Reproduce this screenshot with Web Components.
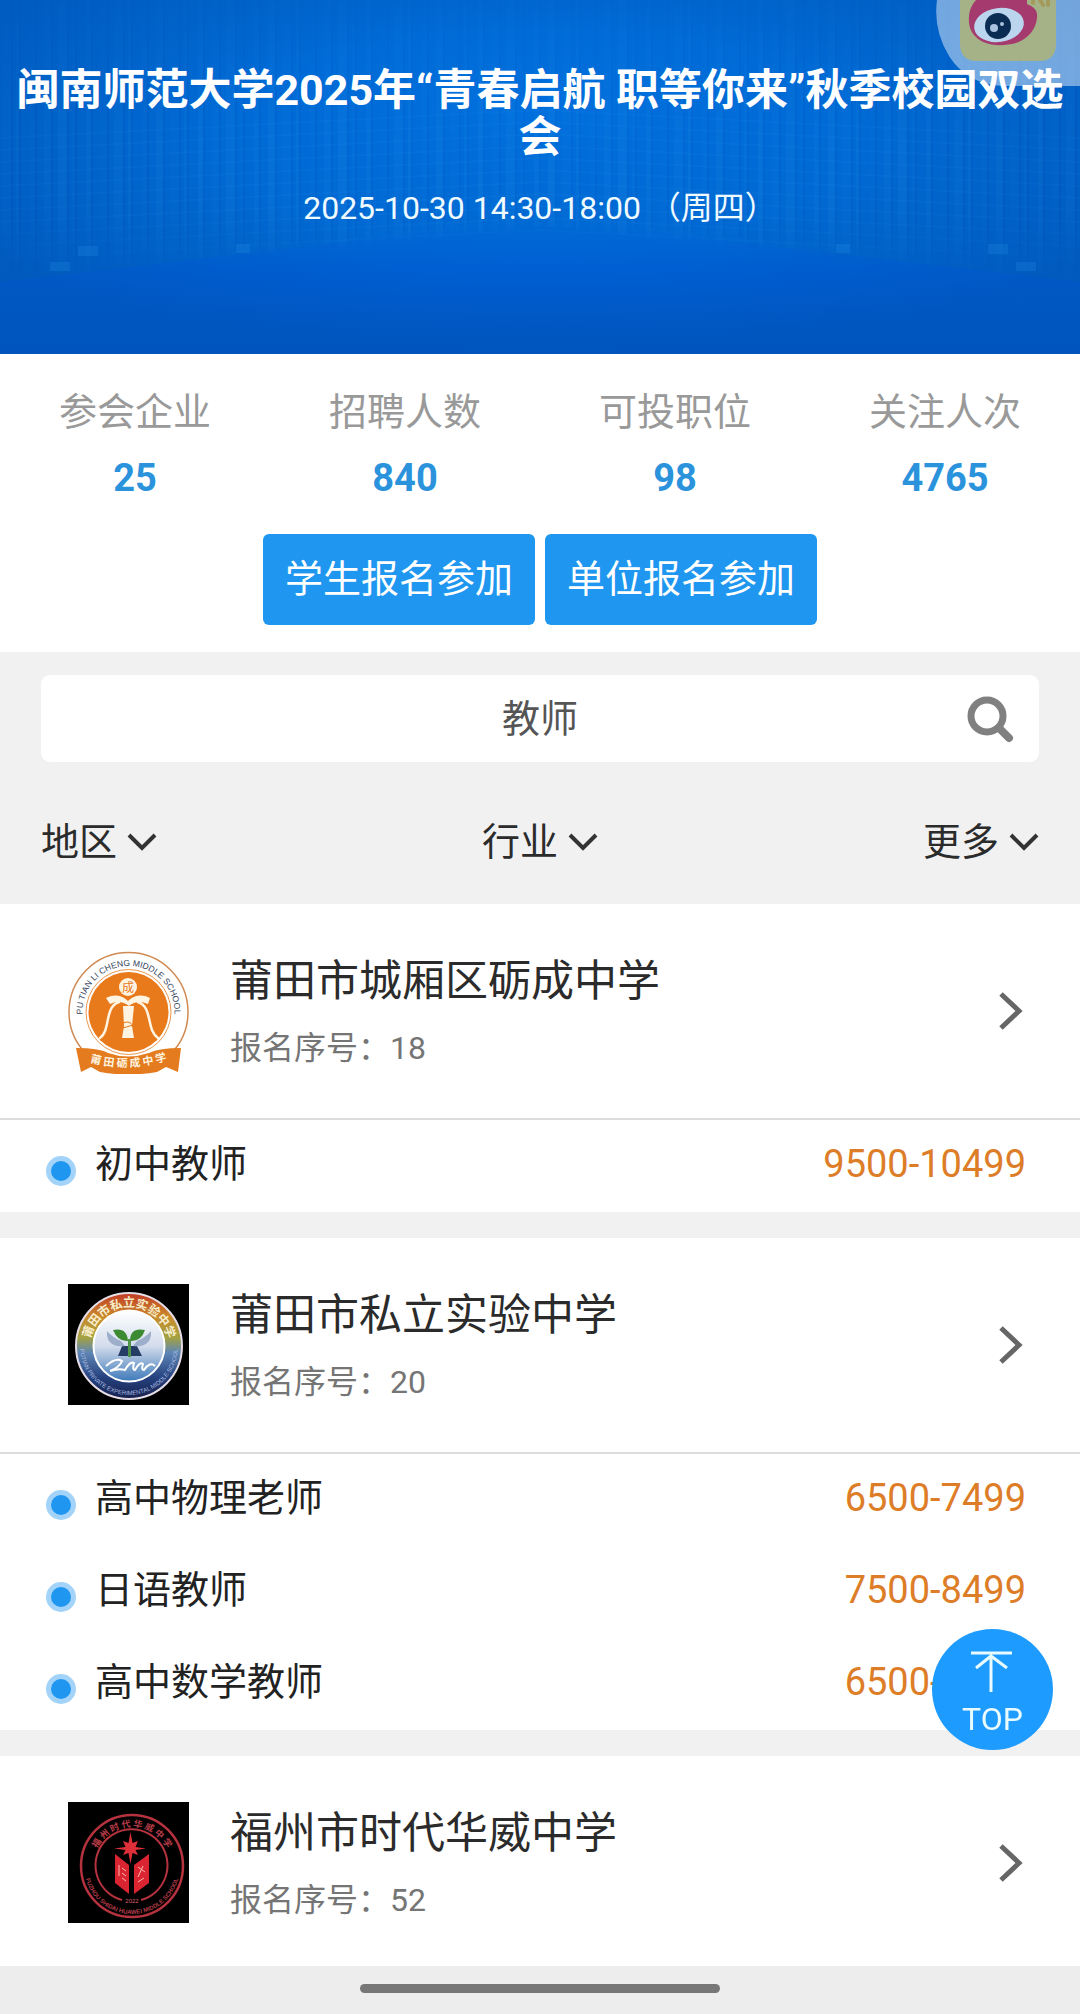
<!DOCTYPE html>
<html lang="zh-CN">
<head>
<meta charset="UTF-8">
<meta name="viewport" content="width=device-width, initial-scale=1">
<title>闽南师范大学2025年秋季校园双选会</title>
<style>
    :root {
        --blue: #1f97f0;
        --grey: #f1f1f1;
        --line: #dcdcdc;
        --text: #2b2b2b;
        --muted: #757575;
        --salary: #dd7d27;
        --fs-title: 43px;
        --fs-body: 38px;
        --fs-small: 32px;
    }
    body {
        margin: 0;
        background: #fff;
        color: var(--text);
        font-family: Roboto, "Noto Sans CJK SC", sans-serif;
        font-size: var(--fs-body);
    }
</style>
</head>
<body>

<fair-page>
    <fair-banner when="2025-10-30 14:30-18:00 （周四）">闽南师范大学2025年“青春启航 职等你来”秋季校园双选会</fair-banner>

    <fair-summary>
        <fair-stat label="参会企业">25</fair-stat>
        <fair-stat label="招聘人数">840</fair-stat>
        <fair-stat label="可投职位">98</fair-stat>
        <fair-stat label="关注人次">4765</fair-stat>
        <action-button slot="actions">学生报名参加</action-button>
        <action-button slot="actions">单位报名参加</action-button>
    </fair-summary>

    <search-panel value="教师">
        <filter-select label="地区"></filter-select>
        <filter-select label="行业"></filter-select>
        <filter-select label="更多"></filter-select>
    </search-panel>

    <company-card name="莆田市城厢区砺成中学" number="18">
        <logo-licheng slot="logo"></logo-licheng>
        <job-row pay="9500-10499">初中教师</job-row>
    </company-card>

    <company-card name="莆田市私立实验中学" number="20">
        <logo-shiyan slot="logo"></logo-shiyan>
        <job-row pay="6500-7499">高中物理老师</job-row>
        <job-row pay="7500-8499">日语教师</job-row>
        <job-row pay="6500-7499">高中数学教师</job-row>
    </company-card>

    <company-card name="福州市时代华威中学" number="52">
        <logo-huawei slot="logo"></logo-huawei>
    </company-card>

    <back-top slot="overlay"></back-top>
    <weibo-bubble slot="overlay"></weibo-bubble>
</fair-page>

<script>
/** Base: puts styles and markup in an open shadow root. */
class FairElement extends HTMLElement {
    connectedCallback() {
        if (this.shadowRoot) return;
        this.attachShadow({ mode: 'open' });
        this.shadowRoot.innerHTML = `<style>* { box-sizing: border-box; } ${this.styles()}</style>${this.markup()}`;
    }
    attr(name) {
        return (this.getAttribute(name) ?? '')
            .replace(/&/g, '&amp;').replace(/</g, '&lt;').replace(/"/g, '&quot;');
    }
    styles() { return ':host { display: block; }'; }
    markup() { return '<slot></slot>'; }
}

class FairPage extends FairElement {
    styles() {
        return `
            :host { display: flex; flex-direction: column; height: 100vh; }
            main { flex: 1; min-height: 0; overflow: hidden; }
            footer {
                flex-shrink: 0;
                display: flex;
                justify-content: center;
                padding: 18px 0 21px;
                background: #ededed;
            }
            footer span {
                width: 33.33%;
                height: 9px;
                border-radius: 5px;
                background: #777;
            }
        `;
    }
    markup() {
        return `<main><slot></slot></main><footer><span></span></footer><slot name="overlay"></slot>`;
    }
}

/** <fair-banner when="...">title</fair-banner> */
class FairBanner extends FairElement {
    // two walls of thin panels running towards the middle
    #panels() {
        let out = '';
        for (let x = 2; x < 1080; x += 14) {
            const d = Math.abs(x - 540) / 540;
            const bottom = 226 + 60 * d;
            const w = 3 + (x * 7) % 8;
            const o = 0.04 + ((x * 13) % 5) * 0.02;
            out += `<rect x="${x}" width="${w}" height="${bottom}" fill="#2fa0f0" opacity="${o.toFixed(3)}"/>`;
            out += `<rect x="${x + w}" width="2" height="${bottom - 10}" fill="#003f9e" opacity="${(0.06 + d * 0.12).toFixed(3)}"/>`;
        }
        for (let y = 130; y < 260; y += 12) {
            out += `<path d="M0 ${y + 8}L540 ${y - 20}L1080 ${y + 8}" fill="none" stroke="#3aa6f2" stroke-width="2" opacity=".07"/>`;
        }
        return out;
    }
    styles() {
        return `
            :host { display: block; }
            header {
                display: grid;
                background: #0063d2;
                color: #fff;
                text-align: center;
            }
            svg, .text { grid-area: 1 / 1; }
            svg { width: 100%; height: 100%; min-height: 0; contain: size; }
            .text { padding: 67px 12px 122px; z-index: 0; }
            h1 {
                margin: 0 0 24px;
                font-size: var(--fs-title);
                line-height: 47px;
                font-weight: 700;
            }
            p {
                margin: 0;
                font-size: var(--fs-small);
                line-height: 47px;
                white-space: pre;
            }
            time { color: #effaff; }
        `;
    }
    markup() {
        return `
            <header>
                <svg viewBox="0 0 1080 354" preserveAspectRatio="none" aria-hidden="true">
                    <defs>
                        <radialGradient id="glow" cx=".5" cy=".3" r=".65">
                            <stop offset="0" stop-color="#006fdd"/>
                            <stop offset="1" stop-color="#0064cb"/>
                        </radialGradient>
                        <linearGradient id="floor" x1="0" y1="0" x2="0" y2="1">
                            <stop offset="0" stop-color="#0062d8" stop-opacity=".1"/>
                            <stop offset=".35" stop-color="#0060d6" stop-opacity=".9"/>
                            <stop offset="1" stop-color="#005ac8"/>
                        </linearGradient>
                        <radialGradient id="shade" cx=".5" cy=".4" r=".6">
                            <stop offset=".5" stop-color="#004aa8" stop-opacity="0"/>
                            <stop offset="1" stop-color="#004aa8" stop-opacity=".35"/>
                        </radialGradient>
                        <linearGradient id="fade" x1="0" y1="0" x2="0" y2="1">
                            <stop offset="0" stop-color="#444"/>
                            <stop offset=".4" stop-color="#fff"/>
                            <stop offset=".6" stop-color="#fff"/>
                            <stop offset=".82" stop-color="#000"/>
                        </linearGradient>
                        <mask id="soft"><rect width="1080" height="354" fill="url(#fade)"/></mask>
                    </defs>
                    <rect width="1080" height="354" fill="url(#glow)"/>
                    <g mask="url(#soft)">${this.#panels()}</g>
                    <path d="M0 282L430 232Q540 222 650 232L1080 282V354H0Z" fill="url(#floor)"/>
                    <rect width="1080" height="354" fill="url(#shade)"/>
                    <g fill="#2d9dee" opacity=".2">
                        <rect x="78" y="246" width="20" height="10"/><rect x="50" y="262" width="20" height="9"/>
                        <rect x="236" y="244" width="14" height="9"/><rect x="836" y="244" width="14" height="9"/>
                        <rect x="988" y="244" width="20" height="10"/><rect x="1016" y="262" width="20" height="9"/>
                    </g>
                </svg>
                <div class="text">
                    <h1><slot></slot></h1>
                    <p><time>${this.attr('when')}</time></p>
                </div>
            </header>`;
    }
}

class FairSummary extends FairElement {
    styles() {
        return `
            :host { display: block; padding: 30px 0 27px; background: #fff; }
            .stats { display: grid; grid-template-columns: repeat(4, 1fr); }
            .actions { display: flex; justify-content: center; gap: 10px; margin-top: 28px; }
        `;
    }
    markup() {
        return `<div class="stats"><slot></slot></div><div class="actions"><slot name="actions"></slot></div>`;
    }
}

class FairStat extends FairElement {
    styles() {
        return `
            :host { display: block; text-align: center; }
            .label { line-height: 56px; color: #999; }
            .value { margin-top: 10px; line-height: 56px; font-weight: 700; color: #2b93dc; }
        `;
    }
    markup() {
        return `<div class="label">${this.attr('label')}</div><div class="value"><slot></slot></div>`;
    }
}

class ActionButton extends FairElement {
    styles() {
        return `
            :host { display: block; }
            button {
                display: block;
                padding: 17px 22px 18px;
                border: 0;
                border-radius: 6px;
                background: var(--blue);
                color: #fff;
                font: inherit;
                line-height: 56px;
                cursor: pointer;
            }
        `;
    }
    markup() { return `<button type="button"><slot></slot></button>`; }
}

/** <search-panel value="...">: search box with a row of filters below it. */
class SearchPanel extends FairElement {
    styles() {
        return `
            :host { display: block; padding: 23px 41px 34px; background: var(--grey); }
            form {
                display: flex;
                padding-left: 98px;
                border-radius: 9px;
                background: #fff;
                overflow: hidden;
            }
            input {
                flex: 1;
                min-width: 0;
                height: 87px;
                padding: 0 0 6px;
                border: 0;
                outline: 0;
                background: transparent;
                color: #555;
                font: inherit;
                text-align: center;
            }
            button {
                display: grid;
                place-items: center;
                width: 98px;
                padding: 0;
                border: 0;
                background: transparent;
                cursor: pointer;
            }
            .filters { display: flex; justify-content: space-between; margin-top: 52px; }
        `;
    }
    markup() {
        return `
            <form role="search" onsubmit="return false">
                <input type="text" aria-label="搜索" value="${this.attr('value')}">
                <button type="submit" aria-label="搜索">
                    <svg width="48" height="48" viewBox="0 0 48 48" fill="none" stroke="#808080" aria-hidden="true">
                        <circle cx="21" cy="21" r="16" stroke-width="7"/>
                        <path d="M33 33L43 43" stroke-width="8" stroke-linecap="round"/>
                    </svg>
                </button>
            </form>
            <div class="filters"><slot></slot></div>`;
    }
}

class FilterSelect extends FairElement {
    styles() {
        return `
            :host { display: block; }
            label { display: flex; align-items: center; gap: 9px; min-height: 56px; }
            select {
                appearance: none;
                margin: 0;
                padding: 0;
                border: 0;
                outline: 0;
                background: transparent;
                color: var(--text);
                font: inherit;
                line-height: 56px;
            }
        `;
    }
    markup() {
        return `
            <label>
                <select aria-label="${this.attr('label')}"><option>${this.attr('label')}</option></select>
                <svg width="30" height="24" viewBox="0 0 30 24" fill="none" stroke="#333" stroke-width="4" aria-hidden="true">
                    <path d="M2 5L15 18L28 5"/>
                </svg>
            </label>`;
    }
}

/** <company-card name number>: header link plus slotted job rows. */
class CompanyCard extends FairElement {
    styles() {
        return `
            :host { display: block; background: #fff; border-bottom: 26px solid var(--grey); }
            a {
                display: flex;
                align-items: flex-start;
                padding: 46px 56px 46px 68px;
                border-bottom: 2px solid var(--line);
                color: inherit;
                text-decoration: none;
            }
            .logo { width: 121px; height: 121px; flex-shrink: 0; }
            .body { flex: 1; min-width: 0; margin-left: 41px; }
            h2 { margin: 0; font-size: var(--fs-title); line-height: 62px; font-weight: 400; }
            p { margin: 12px 0 0; font-size: var(--fs-small); line-height: 48px; color: var(--muted); }
            .arrow { align-self: center; }
        `;
    }
    markup() {
        return `
            <a href="#">
                <div class="logo"><slot name="logo"></slot></div>
                <div class="body">
                    <h2>${this.attr('name')}</h2>
                    <p>报名序号：${this.attr('number')}</p>
                </div>
                <svg class="arrow" width="26" height="42" viewBox="0 0 26 42" fill="none" stroke="#666" stroke-width="5" aria-hidden="true">
                    <path d="M3 4L21 21L3 38"/>
                </svg>
            </a>
            <slot></slot>`;
    }
}

class JobRow extends FairElement {
    styles() {
        return `
            :host {
                display: flex;
                align-items: flex-start;
                padding: 16px 54px 20px 46px;
                line-height: 56px;
                color: #222;
            }
            .dot {
                width: 30px;
                height: 30px;
                margin: 20px 19px 0 0;
                border: 5px solid #a3d3f8;
                border-radius: 50%;
                background: var(--blue);
            }
            .name { flex: 1; }
            .pay { color: var(--salary); }
        `;
    }
    markup() {
        return `<span class="dot"></span><span class="name"><slot></slot></span><span class="pay">${this.attr('pay')}</span>`;
    }
}

class BackTop extends FairElement {
    styles() {
        return `
            :host { position: fixed; right: 27px; bottom: 264px; }
            button {
                display: flex;
                flex-direction: column;
                align-items: center;
                width: 121px;
                height: 121px;
                padding: 20px 0 0;
                border: 0;
                border-radius: 50%;
                background: #1e9bff;
                color: #e8fbff;
                font: inherit;
                font-size: var(--fs-small);
                line-height: 48px;
                cursor: pointer;
            }
            svg { display: block; flex-shrink: 0; }
        `;
    }
    markup() {
        return `
            <button type="button" onclick="scrollTo(0, 0)">
                <svg width="46" height="46" viewBox="0 0 46 46" fill="none" stroke="#e8fbff" stroke-width="3" aria-hidden="true">
                    <path d="M1 4H42M21 7V43M6 19L21 7L37 19"/>
                </svg>
                TOP
            </button>`;
    }
}

/** Floating app bubble docked to the top right edge. */
class WeiboBubble extends FairElement {
    styles() {
        return `
            :host { position: fixed; top: 0; right: 0; pointer-events: none; }
            svg { display: block; }
        `;
    }
    markup() {
        return `
            <svg width="144" height="86" viewBox="0 0 144 86" aria-hidden="true">
                <path d="M1 0Q-3 30 13 56Q31 84 66 86H144V0Z" fill="#fff" opacity=".45"/>
                <path d="M24 0H120V44Q120 61 103 61H41Q24 61 24 44Z" fill="#aeb478" opacity=".85"/>
                <path d="M40 0C32 8 32 20 34 28C40 45 62 48 80 43C92 39 100 29 101 18C102 10 98 7 91 4V0Z" fill="#a43a6d"/>
                <ellipse cx="63" cy="25" rx="25" ry="17" fill="#bcd5ef" transform="rotate(-8 63 25)"/>
                <circle cx="62" cy="26" r="13" fill="#0b2c52"/>
                <circle cx="58" cy="28" r="4" fill="#a9c3df"/>
                <circle cx="66" cy="24" r="2" fill="#a9c3df"/>
                <path d="M97 0V3M104 0L107 5M112 0V5" stroke="#a39a5c" stroke-width="4" stroke-linecap="round"/>
            </svg>`;
    }
}

const LOGO_STYLES = `
    :host { display: block; }
    svg { display: block; width: 100%; }
    text { font-family: "Noto Sans CJK SC", sans-serif; }
    .en { font-family: "Liberation Sans", sans-serif; }
`;

class LogoLicheng extends FairElement {
    styles() { return LOGO_STYLES; }
    markup() {
        return `
            <svg viewBox="0 0 121 124" aria-hidden="true">
                <defs>
                    <path id="ring" d="M16.700 76A46 46 0 1 1 104.300 76"/>
                    <path id="scroll" d="M18 111Q60 124 103 109"/>
                </defs>
                <circle cx="60.500" cy="62" r="59.500" fill="#fff" stroke="#d08a52" stroke-width="1.500"/>
                <circle cx="60.500" cy="62" r="42.500" fill="#fff" stroke="#e9974d"/>
                <circle cx="60.500" cy="62" r="40" fill="#e87a1c"/>
                <g fill="#fff4e2">
                    <circle cx="60" cy="37" r="9"/>
                    <path d="M38 48Q50 42 60 51Q70 42 82 48L80 54Q69 49 61 56Q52 49 42 54Z"/>
                    <path d="M55 56H66L64 76L66 88H54L56 76Z"/>
                </g>
                <g fill="none" stroke="#fff4e2" stroke-width="2.500" stroke-linecap="round">
                    <path d="M51 52C36 57 43 80 32 88M70 52C85 57 78 80 90 88"/>
                </g>
                <path d="M55 73Q62 70 65 76M55 78L65 75" fill="none" stroke="#e87a1c"/>
                <text x="60" y="42" font-size="12" text-anchor="middle" fill="#e87a1c">成</text>
                <path d="M8 98Q31 98 40 103Q60 110 81 103Q91 98 113 98L110 122L98 117L89 122Q60 127 32 122L23 117L13 122Z" fill="#e47c1f"/>
                <text class="en" font-size="8.500" fill="#35435c"><textPath href="#ring" startOffset="50%" text-anchor="middle">PU TIAN LI CHENG MIDDLE SCHOOL</textPath></text>
                <text font-size="11" font-weight="700" fill="#fff2df"><textPath href="#scroll" startOffset="50%" text-anchor="middle">莆 田 砺 成 中 学</textPath></text>
            </svg>`;
    }
}

class LogoShiyan extends FairElement {
    styles() { return LOGO_STYLES; }
    markup() {
        return `
            <svg viewBox="0 0 121 121" aria-hidden="true">
                <defs>
                    <linearGradient id="band" x1="0" y1="0" x2="0" y2="1">
                        <stop offset="0" stop-color="#c13a26"/>
                        <stop offset=".22" stop-color="#c98a2c"/>
                        <stop offset=".42" stop-color="#a4a241"/>
                        <stop offset=".56" stop-color="#5f86b5"/>
                        <stop offset=".8" stop-color="#25417e"/>
                        <stop offset="1" stop-color="#17204c"/>
                    </linearGradient>
                    <linearGradient id="sky" x1="0" y1="0" x2="0" y2="1">
                        <stop offset="0" stop-color="#fff"/>
                        <stop offset=".5" stop-color="#d3dcec"/>
                        <stop offset="1" stop-color="#3d79b9"/>
                    </linearGradient>
                    <path id="top" d="M22 62A39 39 0 0 1 100 62"/>
                    <path id="low" d="M12 62A49 49 0 0 0 110 62"/>
                </defs>
                <rect width="121" height="121" fill="#000"/>
                <circle cx="61" cy="62" r="53" fill="url(#band)" stroke="#e7dde6" stroke-width="2"/>
                <circle cx="61" cy="62" r="35.500" fill="url(#sky)" stroke="#fff" stroke-width="2"/>
                <path d="M54 62L50 72H60V58H63V72H74L69 62Z" fill="#253d65"/>
                <path d="M39 47Q38 64 57 62L53 57Q45 54 39 47ZM83 47Q84 64 65 62L69 57Q77 54 83 47Z" fill="#9daecb"/>
                <path d="M60 57Q59 43 45 46Q50 58 60 57ZM62 57Q62 43 77 46Q73 58 62 57Z" fill="#3c8a32"/>
                <path d="M60 55H63V73H60Z" fill="#4d9448"/>
                <path d="M38 82Q48 73 54 77Q52 83 42 87Q51 84 57 86Q62 77 66 79Q64 86 67 86Q72 77 75 80Q73 86 76 86Q82 77 87 82" fill="none" stroke="#fff" stroke-width="2"/>
                <text font-size="12" font-weight="700" fill="#f7edca"><textPath href="#top" startOffset="50%" text-anchor="middle">莆田市私立实验中学</textPath></text>
                <text class="en" font-size="6" fill="#a9bde0"><textPath href="#low" startOffset="50%" text-anchor="middle">PUTIAN PRIVATE EXPERIMENTAL MIDDLE SCHOOL</textPath></text>
            </svg>`;
    }
}

class LogoHuawei extends FairElement {
    styles() { return LOGO_STYLES; }
    markup() {
        return `
            <svg viewBox="0 0 121 121" aria-hidden="true">
                <defs>
                    <path id="top" d="M25 64A39 39 0 0 1 103 64"/>
                    <path id="low" d="M16 64A48 48 0 0 0 112 64"/>
                </defs>
                <rect width="121" height="121" fill="#000"/>
                <g fill="none" stroke="#b5323f">
                    <circle cx="64" cy="64" r="51" stroke-width="2.500"/>
                    <path d="M54 98A36 36 0 1 1 73 98" stroke-width="2"/>
                </g>
                <path d="M47 52L61 63V92L47 81ZM81 52L66 63V92L81 81Z" fill="#da2431"/>
                <path d="M62.500 30L64.500 41L70 39L67.500 45L78 46.500L67.500 48L70 53L64.500 51L62.500 62L60.500 51L55 53L57.500 48L46 46.500L57.500 45L55 39L60.500 41Z" fill="#df3039"/>
                <path d="M51 63V74M54 66L58 69M54 71L58 74M54 76L58 79M70 65L77 70M70 75L75 64M70 80L76 76" stroke="#ffb9af" fill="none"/>
                <text font-size="9" font-weight="700" fill="#b83c48"><textPath href="#top" startOffset="50%" text-anchor="middle">福 州 时 代 华 威 中 学</textPath></text>
                <text class="en" font-size="6" font-weight="700" fill="#b43d49"><textPath href="#low" startOffset="50%" text-anchor="middle">FUZHOU SHIDAI HUAWEI MIDDLE SCHOOL</textPath></text>
                <text class="en" x="64" y="101" font-size="6" text-anchor="middle" fill="#d9626c">2022</text>
            </svg>`;
    }
}

customElements.define('fair-page', FairPage);
customElements.define('fair-banner', FairBanner);
customElements.define('fair-summary', FairSummary);
customElements.define('fair-stat', FairStat);
customElements.define('action-button', ActionButton);
customElements.define('search-panel', SearchPanel);
customElements.define('filter-select', FilterSelect);
customElements.define('company-card', CompanyCard);
customElements.define('job-row', JobRow);
customElements.define('back-top', BackTop);
customElements.define('weibo-bubble', WeiboBubble);
customElements.define('logo-licheng', LogoLicheng);
customElements.define('logo-shiyan', LogoShiyan);
customElements.define('logo-huawei', LogoHuawei);
</script>
</body>
</html>
